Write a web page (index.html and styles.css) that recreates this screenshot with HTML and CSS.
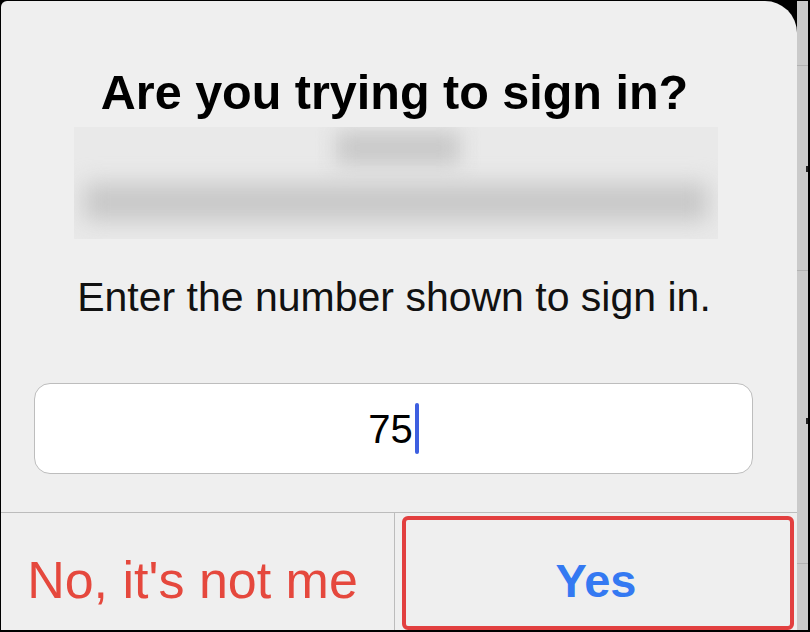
FILE: index.html
```html
<!DOCTYPE html>
<html lang="en">

<head>
    <meta charset="UTF-8">
    <title>Sign-in request</title>
    <link rel="stylesheet" href="styles.css">
</head>

<body>
	<div class="frame">
		<div class="dialog">
			<h1 class="title">Are you trying to sign in?</h1>
			<div class="account">
				<div class="blurName"></div>
				<div class="blurMail"></div>
			</div>
			<p class="hint">Enter the number shown to sign in.</p>
			<div class="codeBox">
				<span class="code">75</span><span class="caret"></span>
			</div>
			<div class="actions">
				<div class="btn deny">No, it's not me</div>
				<div class="btn approve">Yes<span class="mark"></span></div>
			</div>
		</div>
		<div class="behind"></div>
	</div>
</body>

</html>
```

FILE: styles.css
```css
html,body,h1,p,div{margin:0;padding:0;}
body{background:#000;font-family:"Liberation Sans",Arial,sans-serif;}
.frame{display:flex;width:807px;height:629px;padding:1px 2px 2px 1px;background:#000;}
.dialog{display:flex;flex-direction:column;width:796px;background:#efefef;border-top-right-radius:32px;border-top-left-radius:6px;}
.behind{flex:1;background:#cacaca;
	background-image:
		linear-gradient(#b2b2b2,#b2b2b2),
		linear-gradient(#b2b2b2,#b2b2b2),
		linear-gradient(#b2b2b2,#b2b2b2),
		linear-gradient(#222,#222),
		linear-gradient(#222,#222);
	background-repeat:no-repeat;
	background-size:100% 1px,100% 1px,100% 1px,2px 6px,2px 6px;
	background-position:0 64px,0 269px,0 562px,right 0 top 165px,right 0 top 417px;}

.title{padding:63px 9px 0 0;font-size:48.5px;line-height:56px;font-weight:bold;text-align:center;color:#000;}
.account{overflow:hidden;width:644px;height:112px;margin:7px 0 0 73px;background:#e9e9e9;}
.blurName{margin:4px 0 0 262px;width:124px;height:34px;background:#c9c9c9;filter:blur(10px);}
.blurMail{margin:18px 0 0 10px;width:624px;height:38px;background:#c8c8c8;filter:blur(11px);}

.hint{margin-top:34px;padding-right:10px;font-size:41px;line-height:48px;text-align:center;color:#111;}

.codeBox{display:flex;align-items:center;justify-content:center;width:717px;height:89px;margin:62px 0 0 33px;background:#fff;border:1px solid #bdbdbd;border-radius:16px;}
.code{font-size:40px;line-height:40px;color:#000;}
.caret{width:4px;height:51px;margin-left:2px;border-radius:2px;background:#3d5fe0;}

.actions{display:flex;flex:1;margin-top:38px;border-top:1px solid #bcbcbc;}
.btn{display:flex;align-items:center;justify-content:center;padding-top:17px;}
.deny{width:383px;padding-right:10px;border-right:1px solid #bcbcbc;font-size:52px;color:#e5483d;white-space:nowrap;}
.approve{position:relative;flex:1;font-size:47px;font-weight:bold;color:#3479f2;}
.mark{position:absolute;left:7px;right:3px;top:3px;bottom:0;border:4px solid #e23f3f;border-radius:6px;}
```
